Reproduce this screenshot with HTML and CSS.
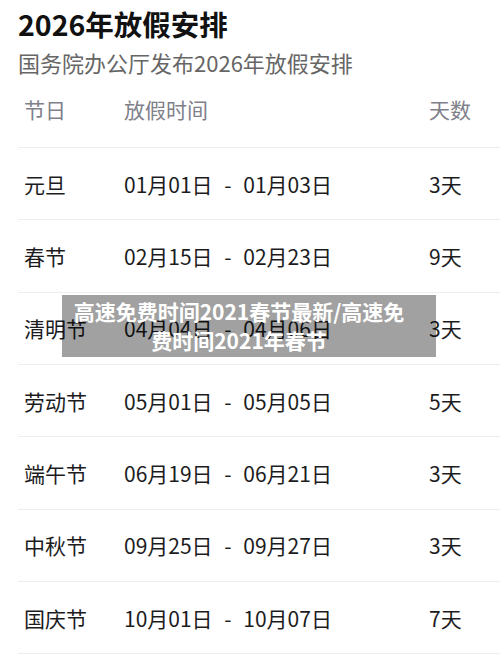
FILE: index.html
```html
<!DOCTYPE html>
<html lang="zh-CN">
<head>
    <meta charset="UTF-8">
    <meta name="viewport" content="width=device-width, initial-scale=1.0">
    <title>2026年放假安排</title>
    <link rel="stylesheet" href="styles.css">
</head>
<body>
    <div class="page">
        <h1>2026年放假安排</h1>
        <p class="subtitle">国务院办公厅发布2026年放假安排</p>

        <div class="table">
            <div class="row head">
                <span class="name">节日</span>
                <span class="dates">放假时间</span>
                <span class="days">天数</span>
            </div>
            <div class="row">
                <span class="name">元旦</span>
                <span class="dates">01月01日 - 01月03日</span>
                <span class="days">3天</span>
            </div>
            <div class="row">
                <span class="name">春节</span>
                <span class="dates">02月15日 - 02月23日</span>
                <span class="days">9天</span>
            </div>
            <div class="row">
                <span class="name">清明节</span>
                <span class="dates">04月04日 - 04月06日</span>
                <span class="days">3天</span>
            </div>
            <div class="row">
                <span class="name">劳动节</span>
                <span class="dates">05月01日 - 05月05日</span>
                <span class="days">5天</span>
            </div>
            <div class="row">
                <span class="name">端午节</span>
                <span class="dates">06月19日 - 06月21日</span>
                <span class="days">3天</span>
            </div>
            <div class="row">
                <span class="name">中秋节</span>
                <span class="dates">09月25日 - 09月27日</span>
                <span class="days">3天</span>
            </div>
            <div class="row">
                <span class="name">国庆节</span>
                <span class="dates">10月01日 - 10月07日</span>
                <span class="days">7天</span>
            </div>
        </div>
    </div>

    <div class="watermark">高速免费时间2021春节最新/高速免<br>费时间2021年春节</div>
</body>
</html>
```

FILE: styles.css
```css
* {
    margin: 0;
    padding: 0;
    box-sizing: border-box;
    font-family: 'Noto Sans CJK SC', 'Noto Sans', sans-serif;
}

body {
    background: #fff;
    color: #1c1c1e;
    width: 500px;
    height: 654px;
    overflow: hidden;
}

.page {
    padding: 6px 0 0 18px;
}

h1 {
    font-size: 28.5px;
    font-weight: 700;
    line-height: 36px;
    color: #111;
}

.subtitle {
    font-size: 22px;
    line-height: 30px;
    margin-top: 5px;
    color: #666;
}

.row {
    display: flex;
    align-items: center;
    height: 72.33px;
    border-bottom: 1px solid #eeeeee;
    font-size: 21px;
}

.row span {
    padding-left: 6px;
}

.row.head {
    height: 71px;
    padding-bottom: 6px;
    color: #80808a;
}

.name {
    width: 100px;
}

.dates {
    width: 305px;
    word-spacing: 7px;
}

.watermark {
    position: absolute;
    left: 62px;
    top: 295px;
    width: 374px;
    height: 62px;
    padding: 2px 20px 0 0;
    background: rgba(0, 0, 0, 0.37);
    color: #fff;
    font-size: 21px;
    font-weight: 700;
    line-height: 29px;
    text-align: center;
    white-space: nowrap;
}
```
